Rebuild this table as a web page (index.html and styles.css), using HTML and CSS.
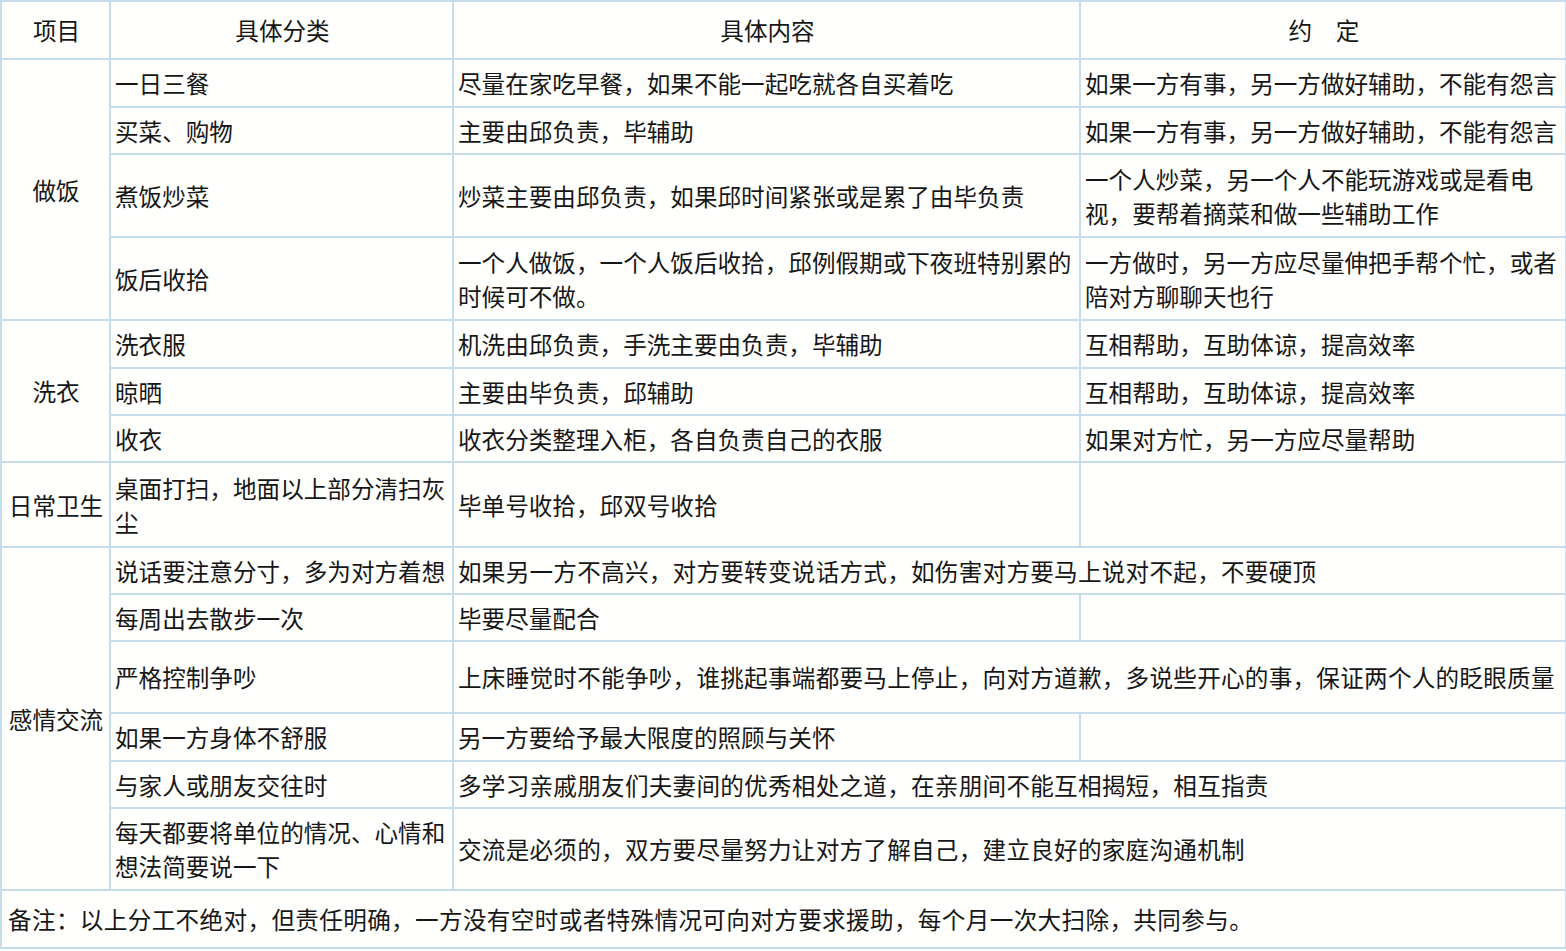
FILE: index.html
```html
<!DOCTYPE html>
<html lang="zh-CN">
<head>
<meta charset="utf-8">
<title>家务分工约定</title>
<link rel="stylesheet" href="styles.css">
</head>
<body>
<table class="chores">
  <colgroup>
    <col class="c1"><col class="c2"><col class="c3"><col class="c4">
  </colgroup>
  <tr class="r-head">
    <th>项目</th><th>具体分类</th><th>具体内容</th><th>约　定</th>
  </tr>
  <tr class="r48">
    <td class="group" rowspan="4">做饭</td>
    <td>一日三餐</td><td>尽量在家吃早餐，如果不能一起吃就各自买着吃</td><td>如果一方有事，另一方做好辅助，不能有怨言</td>
  </tr>
  <tr class="r47">
    <td>买菜、购物</td><td>主要由邱负责，毕辅助</td><td>如果一方有事，另一方做好辅助，不能有怨言</td>
  </tr>
  <tr class="r83">
    <td>煮饭炒菜</td><td>炒菜主要由邱负责，如果邱时间紧张或是累了由毕负责</td><td>一个人炒菜，另一个人不能玩游戏或是看电视，要帮着摘菜和做一些辅助工作</td>
  </tr>
  <tr class="r83">
    <td>饭后收拾</td><td>一个人做饭，一个人饭后收拾，邱例假期或下夜班特别累的时候可不做。</td><td>一方做时，另一方应尽量伸把手帮个忙，或者陪对方聊聊天也行</td>
  </tr>
  <tr class="r48">
    <td class="group" rowspan="3">洗衣</td>
    <td>洗衣服</td><td>机洗由邱负责，手洗主要由负责，毕辅助</td><td>互相帮助，互助体谅，提高效率</td>
  </tr>
  <tr class="r47">
    <td>晾晒</td><td>主要由毕负责，邱辅助</td><td>互相帮助，互助体谅，提高效率</td>
  </tr>
  <tr class="r47">
    <td>收衣</td><td>收衣分类整理入柜，各自负责自己的衣服</td><td>如果对方忙，另一方应尽量帮助</td>
  </tr>
  <tr class="r85">
    <td class="group">日常卫生</td>
    <td>桌面打扫，地面以上部分清扫灰尘</td><td>毕单号收拾，邱双号收拾</td><td></td>
  </tr>
  <tr class="r47">
    <td class="group" rowspan="6">感情交流</td>
    <td>说话要注意分寸，多为对方着想</td><td class="wide" colspan="2">如果另一方不高兴，对方要转变说话方式，如伤害对方要马上说对不起，不要硬顶</td>
  </tr>
  <tr class="r47">
    <td>每周出去散步一次</td><td>毕要尽量配合</td><td></td>
  </tr>
  <tr class="r72">
    <td>严格控制争吵</td><td class="wide" colspan="2">上床睡觉时不能争吵，谁挑起事端都要马上停止，向对方道歉，多说些开心的事，保证两个人的眨眼质量</td>
  </tr>
  <tr class="r48">
    <td>如果一方身体不舒服</td><td>另一方要给予最大限度的照顾与关怀</td><td></td>
  </tr>
  <tr class="r47">
    <td>与家人或朋友交往时</td><td class="wide" colspan="2">多学习亲戚朋友们夫妻间的优秀相处之道，在亲朋间不能互相揭短，相互指责</td>
  </tr>
  <tr class="r82">
    <td>每天都要将单位的情况、心情和想法简要说一下</td><td class="wide" colspan="2">交流是必须的，双方要尽量努力让对方了解自己，建立良好的家庭沟通机制</td>
  </tr>
  <tr class="r58">
    <td class="note" colspan="4">备注：以上分工不绝对，但责任明确，一方没有空时或者特殊情况可向对方要求援助，每个月一次大扫除，共同参与。</td>
  </tr>
</table>
</body>
</html>
```

FILE: styles.css
```css
html, body {
  margin: 0;
  padding: 0;
  background: #ffffff;
}

body {
  font-family: "Noto Sans CJK SC", "Noto Sans", sans-serif;
  color: #161616;
}

.chores {
  width: 1565px;
  border-collapse: collapse;
  table-layout: fixed;
  margin: 0;
  background: #fffffd;
  font-size: 23.6px;
  line-height: 34px;
}

.c1 { width: 109px; }
.c2 { width: 343px; }
.c3 { width: 627px; }
.c4 { width: 486px; }

.chores th,
.chores td {
  border: 2px solid #c5dceb;
  padding: 0 2px 0 4px;
  text-align: left;
  vertical-align: middle;
  font-weight: normal;
}

.chores th {
  text-align: center;
}

.chores td.group {
  text-align: center;
  padding: 0 2px 0 3px;
}

.chores td.wide {
  letter-spacing: 0.25px;
}

.chores td.note {
  padding-left: 6px;
  letter-spacing: 0.35px;
}

.r-head { height: 58px; }
.r47 { height: 47px; }
.r48 { height: 48px; }
.r58 { height: 58px; }
.r72 { height: 72px; }
.r82 { height: 82px; }
.r83 { height: 83px; }
.r85 { height: 85px; }
```
